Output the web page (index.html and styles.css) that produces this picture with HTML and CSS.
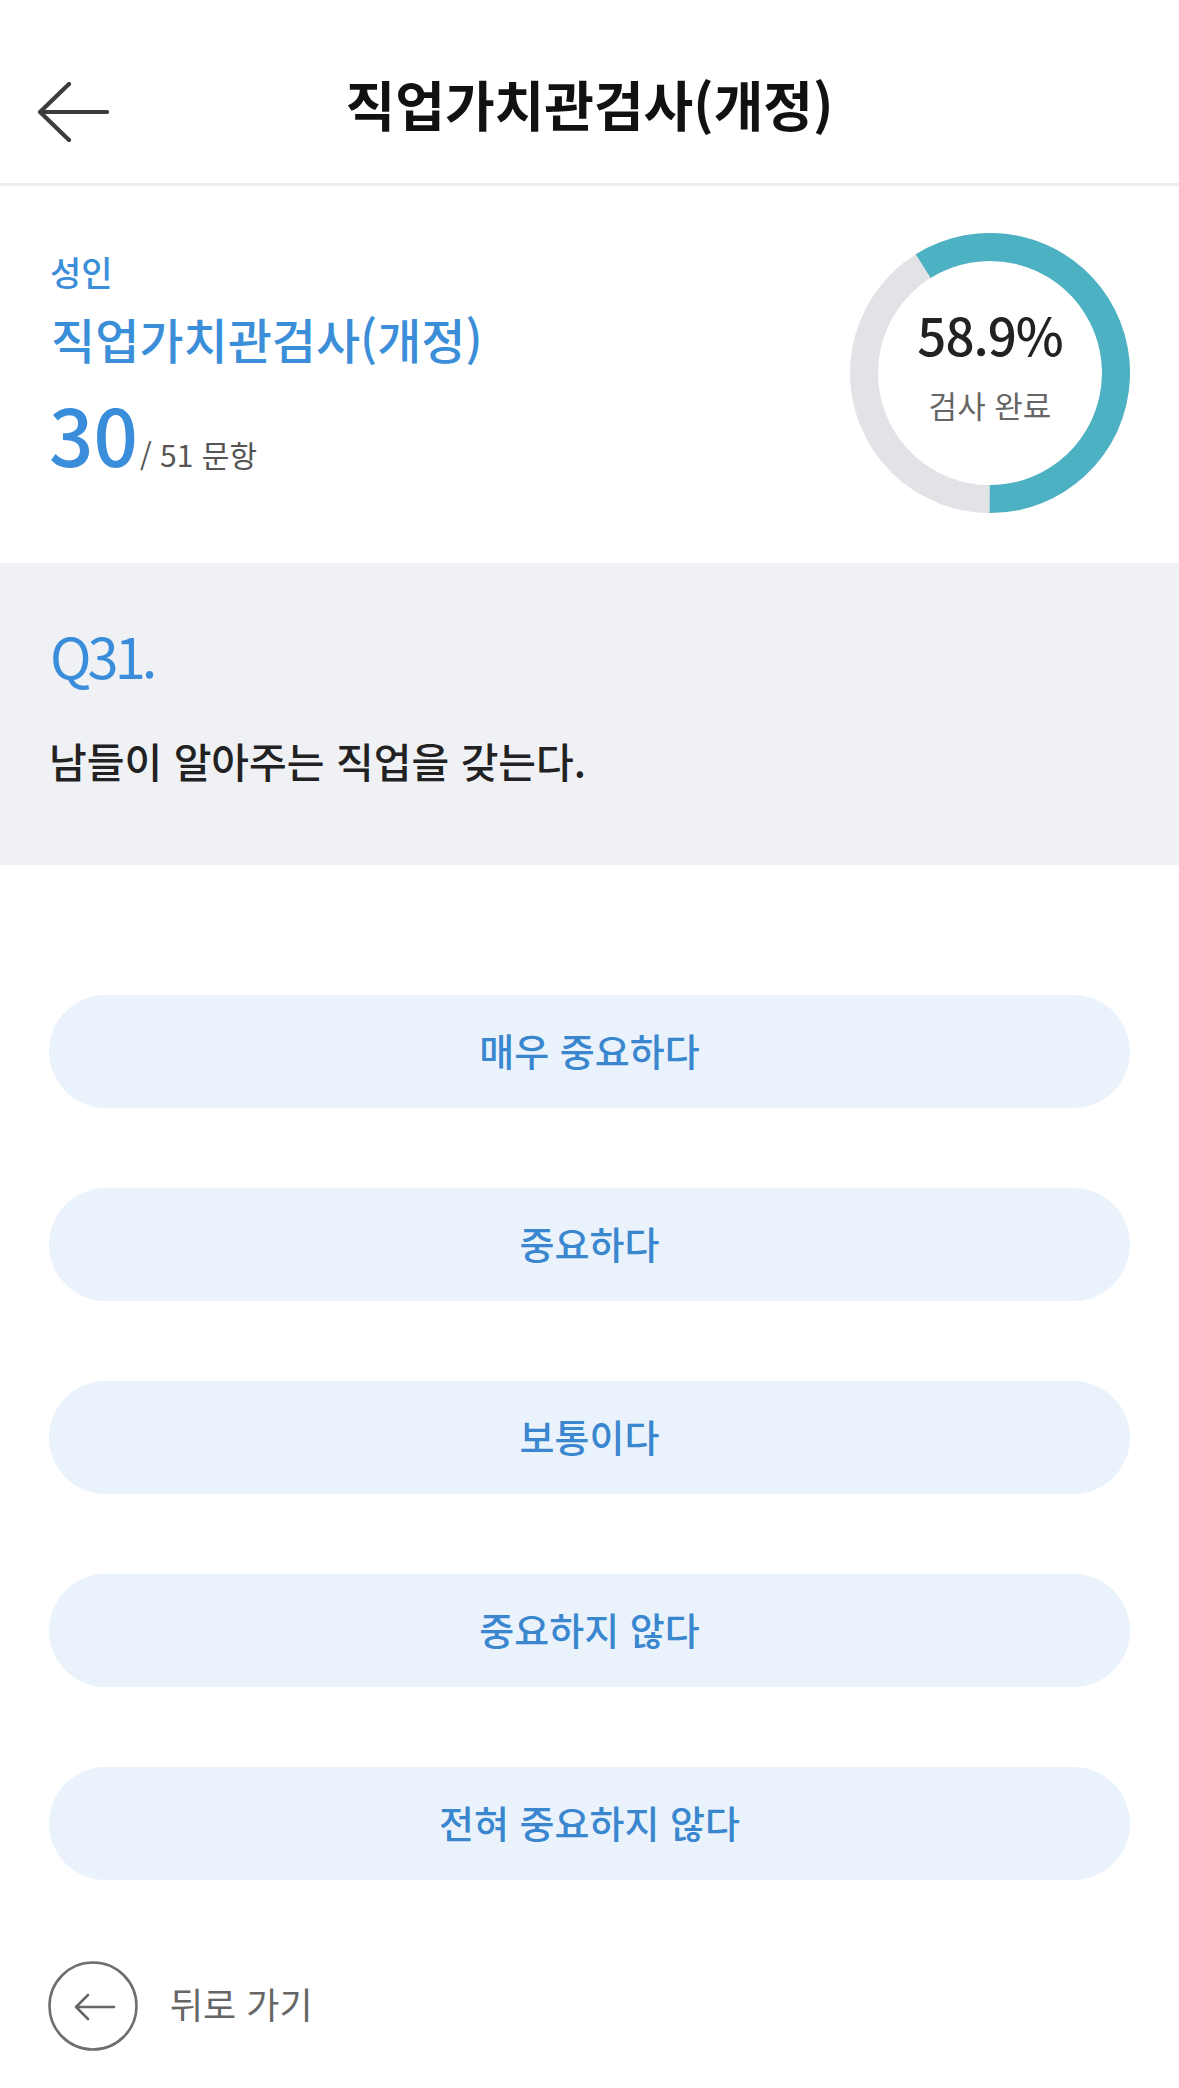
FILE: index.html
```html
<!DOCTYPE html>
<html lang="ko">
<head>
<meta charset="utf-8">
<title>직업가치관검사(개정)</title>
<link rel="stylesheet" href="styles.css">
</head>
<body>
<div class="page">
  <header class="topbar">
    <div class="topbar-back">
      <svg class="back-arrow" viewBox="0 0 72 60" width="72" height="60">
        <path d="M70 30 H3 M32 2 L3 30 L32 58" fill="none" stroke="#3c3c3c" stroke-width="4.2" stroke-linecap="round" stroke-linejoin="round"/>
      </svg>
    </div>
    <h1 class="topbar-title">직업가치관검사(개정)</h1>
    <div class="topbar-spacer"></div>
  </header>

  <section class="info">
    <div class="info-text">
      <div class="info-target">성인</div>
      <div class="info-name">직업가치관검사(개정)</div>
      <div class="info-count"><span class="count-now">30</span><span class="count-total">/ 51 문항</span></div>
    </div>
    <div class="donut">
      <svg class="donut-svg" viewBox="0 0 280 280" width="280" height="280">
        <circle cx="140" cy="140" r="126" fill="none" stroke="#e1e3e7" stroke-width="28"/>
        <circle cx="140" cy="140" r="126" fill="none" stroke="#4cb2c3" stroke-width="28" stroke-dasharray="466.3 791.7" transform="rotate(-122 140 140)"/>
      </svg>
      <div class="donut-label">
        <div class="donut-pct">58.9%</div>
        <div class="donut-caption">검사 완료</div>
      </div>
    </div>
  </section>

  <section class="question">
    <div class="q-num">Q31.</div>
    <div class="q-text">남들이 알아주는 직업을 갖는다.</div>
  </section>

  <section class="answers">
    <button class="answer">매우 중요하다</button>
    <button class="answer">중요하다</button>
    <button class="answer">보통이다</button>
    <button class="answer">중요하지 않다</button>
    <button class="answer">전혀 중요하지 않다</button>
  </section>

  <div class="go-back">
    <svg class="go-back-icon" viewBox="0 0 92 92" width="92" height="92">
      <circle cx="46" cy="46" r="43.5" fill="none" stroke="#6e6e6e" stroke-width="2.6"/>
      <path d="M67 47 H29 M41 35 L29 47 L41 59" fill="none" stroke="#666" stroke-width="2.6" stroke-linecap="round" stroke-linejoin="round"/>
    </svg>
    <span class="go-back-text">뒤로 가기</span>
  </div>
</div>
</body>
</html>
```

FILE: styles.css
```css
* { box-sizing: border-box; }

html, body {
  margin: 0;
  padding: 0;
  background: #ffffff;
}

body {
  font-family: "Noto Sans CJK KR", "Noto Sans", sans-serif;
  color: #222;
}

.page {
  width: 1179px;
  height: 2088px;
  overflow: hidden;
}

/* header */
.topbar {
  height: 186px;
  padding-top: 24px;
  border-bottom: 3px solid #ededed;
  display: grid;
  grid-template-columns: 1fr auto 1fr;
  align-items: center;
}

.topbar-back {
  justify-self: start;
  padding-left: 37px;
  padding-top: 16px;
  display: flex;
}

.topbar-title {
  margin: 0;
  font-size: 54px;
  font-weight: 700;
  line-height: 64px;
  color: #111;
  letter-spacing: 0;
}

/* info */
.info {
  height: 377px;
  display: flex;
  justify-content: space-between;
  align-items: flex-start;
  padding: 0 49px 0 51px;
}

.info-text {
  padding-top: 66px;
  display: flex;
  flex-direction: column;
}

.info-target {
  font-size: 34px;
  line-height: 40px;
  font-weight: 500;
  color: #3b8ed8;
  margin-left: -1px;
}

.info-name {
  margin-top: 17px;
  font-size: 48px;
  line-height: 58px;
  font-weight: 500;
  color: #3b8ed8;
  letter-spacing: 0;
}

.info-count {
  margin-top: 27px;
  display: flex;
  align-items: baseline;
}

.count-now {
  font-size: 78px;
  line-height: 78px;
  font-weight: 500;
  color: #3a8ddb;
  margin-left: -2px;
}

.count-total {
  margin-left: 2px;
  font-size: 30px;
  font-weight: 400;
  color: #555;
}

.donut {
  margin-top: 47px;
  width: 280px;
  height: 280px;
  display: grid;
}

.donut-svg,
.donut-label {
  grid-area: 1 / 1;
}

.donut-label {
  display: flex;
  flex-direction: column;
  align-items: center;
  justify-content: center;
  padding-bottom: 18px;
}

.donut-pct {
  font-size: 51px;
  line-height: 60px;
  font-weight: 500;
  color: #222;
  letter-spacing: -1px;
}

.donut-caption {
  margin-top: 21px;
  font-size: 31px;
  line-height: 40px;
  color: #666;
}

/* question */
.question {
  background: #eff1f5;
  height: 302px;
  padding: 57px 51px 0 49px;
}

.q-num {
  font-size: 56px;
  line-height: 70px;
  font-weight: 400;
  color: #3a8ddb;
  letter-spacing: -4px;
  margin-left: 1px;
}

.q-text {
  margin-top: 45px;
  font-size: 41px;
  line-height: 50px;
  font-weight: 500;
  color: #222;
  letter-spacing: 0;
}

/* answers */
.answers {
  padding: 130px 49px 0 49px;
  display: flex;
  flex-direction: column;
  gap: 80px;
}

.answer {
  height: 113px;
  width: 100%;
  border: 0;
  border-radius: 57px;
  background: #eaf3fb;
  font-family: inherit;
  font-size: 38px;
  font-weight: 500;
  color: #3a87d0;
  letter-spacing: 0;
  padding: 0;
  padding-bottom: 4px;
}

/* back */
.go-back {
  margin-top: 80px;
  padding-left: 47px;
  display: flex;
  align-items: center;
  gap: 31px;
}

.go-back-text {
  font-size: 36px;
  line-height: 44px;
  color: #666;
  letter-spacing: 0;
  padding-bottom: 6px;
}
```
